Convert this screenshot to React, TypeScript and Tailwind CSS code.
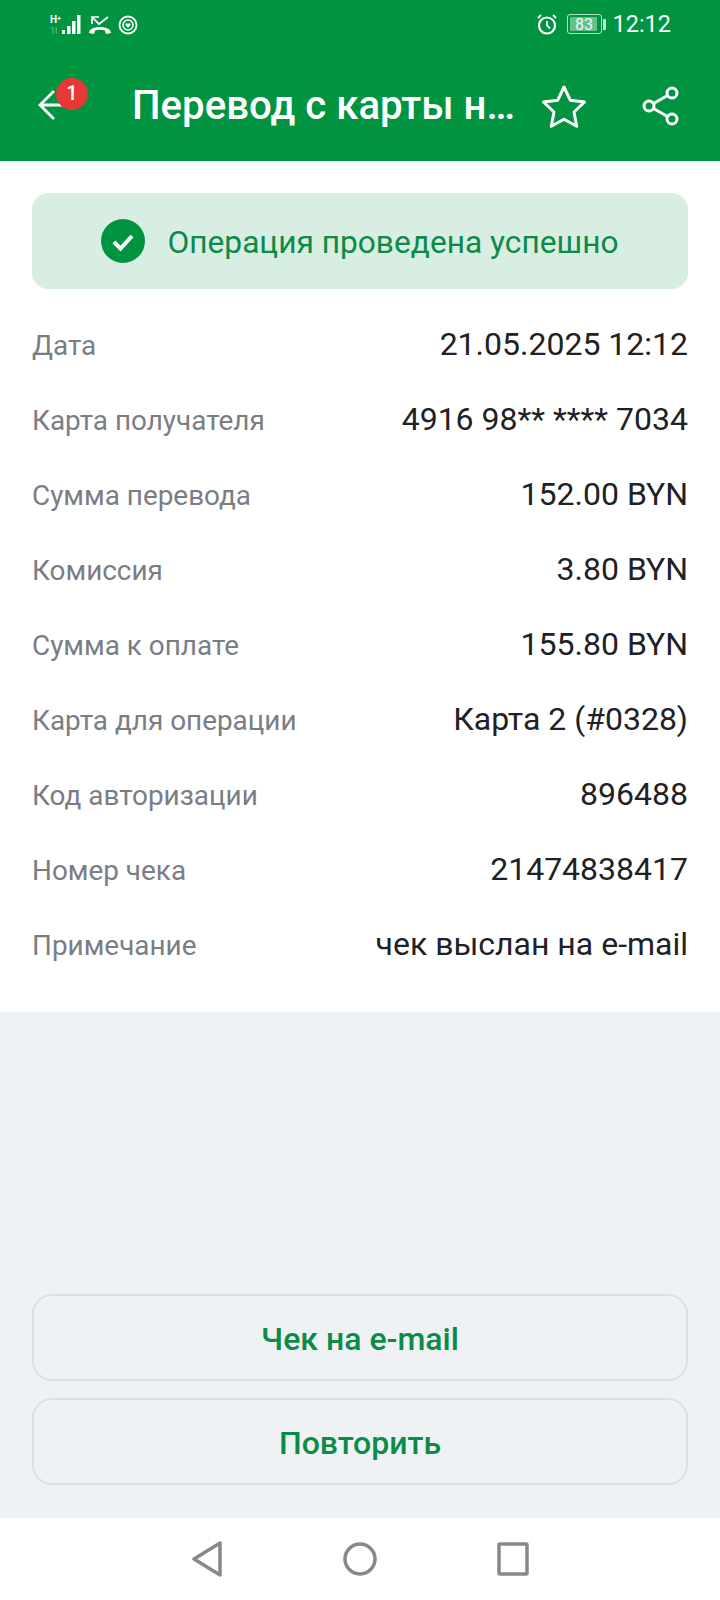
const rows = [
  ['Дата', '21.05.2025 12:12'],
  ['Карта получателя', '4916 98** **** 7034'],
  ['Сумма перевода', '152.00 BYN'],
  ['Комиссия', '3.80 BYN'],
  ['Сумма к оплате', '155.80 BYN'],
  ['Карта для операции', 'Карта 2 (#0328)'],
  ['Код авторизации', '896488'],
  ['Номер чека', '21474838417'],
  ['Примечание', 'чек выслан на e-mail'],
]

function StatusLeft() {
  return (
    <div className="flex items-center pl-[50px] h-[48px] pt-[1px]">
      <div className="relative w-[11px] h-[20px] text-white">
        <span className="absolute left-0 top-[0px] text-[10px] leading-[10px] font-bold">H⁺</span>
        <span className="absolute left-0 top-[12px] text-[9px] leading-[9px] opacity-40">1l</span>
      </div>
      <svg width="22" height="20" viewBox="0 0 22 20" className="text-white">
        <g fill="currentColor">
          <rect x="1" y="15" width="3" height="4" />
          <rect x="6" y="11" width="3.500" height="8" />
          <rect x="11" y="6" width="3.500" height="13" />
          <rect x="16" y="0" width="3.500" height="19" />
        </g>
      </svg>
      <svg width="24" height="22" viewBox="0 0 24 22" className="ml-[5px] text-white">
        <path d="M4 10V3h7M4 3l7 7 9-7" fill="none" stroke="currentColor" strokeWidth="1.700" />
        <path d="M1 19c0-8 22-8 22 0l-5 1-1-3.500c-3-1-7-1-10 0L6 20z" fill="currentColor" />
      </svg>
      <svg width="20" height="20" viewBox="0 0 20 20" className="ml-[6px] text-white">
        <circle cx="10" cy="10" r="8.500" fill="none" stroke="currentColor" strokeWidth="1.800" />
        <circle cx="10" cy="10" r="5" fill="none" stroke="currentColor" strokeWidth="1.500" />
        <path d="M10 13 7.500 10.300a1.500 1.500 0 0 1 2.500-1.600 1.500 1.500 0 0 1 2.500 1.600z" fill="currentColor" />
      </svg>
    </div>
  )
}

function StatusRight() {
  return (
    <div className="flex items-center pr-[49px] h-[48px] text-white">
      <svg width="22" height="22" viewBox="0 0 22 22" fill="none" stroke="currentColor">
        <circle cx="11" cy="12.500" r="8" strokeWidth="2.200" />
        <path d="M11 8v4.500l3 3M2 5l3-3M20 5l-3-3" strokeWidth="1.800" />
      </svg>
      <div className="ml-[9px] w-[35px] h-[20px] rounded-[3px] border border-white/70 p-[2px] flex">
        <div className="w-[27px] h-full bg-white/40 text-[16px] leading-[15px] text-center text-white/90">83</div>
      </div>
      <div className="ml-[1px] w-[3px] h-[11px] bg-white/80 rounded-r-[1px]" />
      <span className="ml-[6px] text-[23.500px] leading-[28px]">12:12</span>
    </div>
  )
}

function Header() {
  return (
    <div className="bg-[#019440] h-[161px] shrink-0 flex flex-col">
      <div className="flex justify-between">
        <StatusLeft />
        <StatusRight />
      </div>
      <div className="flex items-center h-[113px] pt-[3px] text-white">
        <div className="relative w-[132px] h-full shrink-0">
          <svg width="30" height="34" viewBox="0 0 30 34" fill="none" stroke="currentColor" strokeWidth="2.800" className="absolute left-[37px] top-[37px]">
            <path d="M17 3 3 17l14 14M3 17h26" />
          </svg>
          <div className="absolute left-[56px] top-[27px] w-[32px] h-[32px] rounded-full bg-[#E53935] text-[20px] leading-[31px] font-medium text-center">1</div>
        </div>
        <div className="w-[383px] whitespace-nowrap text-[40.200px] leading-[48px] font-medium">Перевод с карты н…</div>
        <svg width="46" height="44" viewBox="0 0 46 44" fill="none" stroke="currentColor" strokeWidth="3" strokeLinejoin="round" className="ml-[26px]">
          <path d="M23 3l6.200 13.200 14.300 1.800-10.500 10 2.700 14.300L23 35.300 10.300 42.300 13 28 2.500 18l14.300-1.800z" />
        </svg>
        <svg width="38" height="40" viewBox="0 0 38 40" fill="none" stroke="currentColor" strokeWidth="3" className="ml-[55px]">
          <circle cx="30" cy="7" r="5" />
          <circle cx="7" cy="20" r="5" />
          <circle cx="30" cy="33" r="5" />
          <path d="M11.500 17.500l14-8M11.500 22.500l14 8" />
        </svg>
      </div>
    </div>
  )
}

function Receipt() {
  return (
    <div className="bg-white h-[851px] shrink-0 px-[32px] pt-[32px]">
      <div className="h-[96px] rounded-[16px] bg-[#D9EEE3] flex items-center justify-center">
        <svg width="44" height="44" viewBox="0 0 44 44">
          <circle cx="22" cy="22" r="22" fill="#019440" />
          <path d="M13 23l6.500 6.500L31 17" fill="none" stroke="white" strokeWidth="4" />
        </svg>
        <span className="ml-[22px] pt-[4px] text-[31.700px] leading-[40px] text-[#0B8A48]">Операция проведена успешно</span>
      </div>
      <div className="mt-[18px]">
        {rows.map(([label, value]) => (
          <div key={label} className="h-[75px] flex items-center justify-between">
            <span className="pt-[2px] text-[27.900px] text-[#7A7D85]">{label}</span>
            <span className="pb-[2px] text-[32px] text-[#202124]">{value}</span>
          </div>
        ))}
      </div>
    </div>
  )
}

function OutlineButton({ children }: { children: string }) {
  return (
    <button className="h-[87px] pt-[3px] rounded-[20px] border-2 border-[#DCE0E3] text-[32px] font-medium text-[#0B8A48]">
      {children}
    </button>
  )
}

function NavBar() {
  return (
    <div className="bg-white h-[82px] shrink-0 relative flex items-center justify-center gap-[120px]">
      <svg width="32" height="36" viewBox="0 0 32 36" fill="none" stroke="#888" strokeWidth="3.500" strokeLinejoin="round">
        <path d="M29 2v32L3 18z" />
      </svg>
      <svg width="34" height="36" viewBox="0 0 34 36" fill="none" stroke="#888" strokeWidth="3.500">
        <circle cx="17" cy="18" r="15" />
      </svg>
      <svg width="32" height="36" viewBox="0 0 32 36" fill="none" stroke="#888" strokeWidth="3.500" strokeLinejoin="round">
        <rect x="2" y="3" width="28" height="30" rx="1" />
      </svg>
    </div>
  )
}

export default function App() {
  return (
    <div className="w-[720px] h-[1600px] flex flex-col bg-[#EFF2F5] font-['Roboto',sans-serif] overflow-hidden">
      <Header />
      <Receipt />
      <div className="flex-1 flex flex-col justify-end gap-[17px] px-[32px] pb-[33px]">
        <OutlineButton>Чек на e-mail</OutlineButton>
        <OutlineButton>Повторить</OutlineButton>
      </div>
      <NavBar />
    </div>
  )
}
